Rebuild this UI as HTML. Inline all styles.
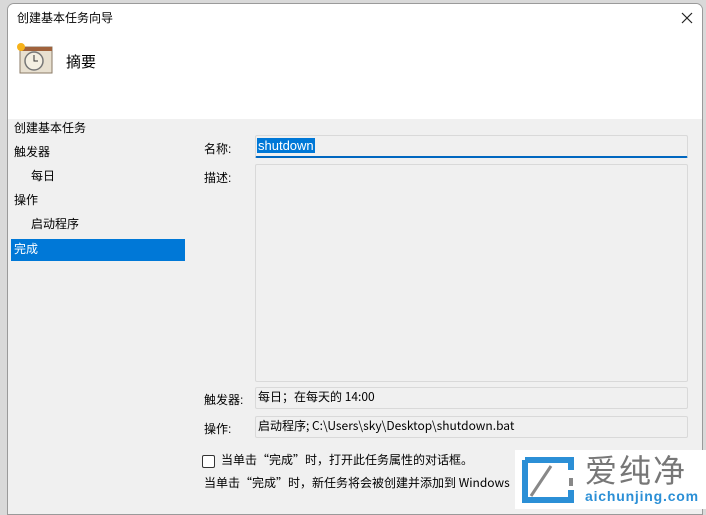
<!DOCTYPE html>
<html><head><meta charset="utf-8"><style>
body{margin:0;width:706px;height:509px;overflow:hidden;background:#d9d9d9;font-family:"Liberation Sans","Noto Sans CJK SC",sans-serif;font-size:12px;color:#000;position:relative}
.dlg{position:absolute;left:7px;top:3px;width:694px;height:510px;background:#f0f0f0;border:1px solid #9a9a9a;border-radius:7px 7px 0 0;overflow:hidden}
.hdr{position:absolute;left:0;top:0;width:100%;height:115px;background:#fff}
.a{position:absolute;white-space:nowrap}
.cj{font-family:"Noto Sans CJK SC",sans-serif}
.box{position:absolute;background:#f0f0f0;border:1px solid #d9d9d9;border-radius:2px}
</style></head><body>
<div class="dlg">
<div class="hdr"></div>
<div class="a" style="left:9px;top:5px">创建基本任务向导</div>
<svg class="a" style="left:673px;top:8px" width="12" height="12"><path d="M1 1L11 11M11 1L1 11" stroke="#222" stroke-width="1.2"/></svg>
<svg class="a" style="left:8px;top:38px" width="40" height="34">
<rect x="4" y="5" width="32" height="26" fill="#e8e0d0" stroke="#8a7a66"/>
<rect x="4" y="5" width="32" height="4" fill="#a0623c"/>
<circle cx="18" cy="19" r="9" fill="#f4efe2" stroke="#777" stroke-width="1.5"/>
<path d="M18 13v6h4" stroke="#333" fill="none"/>
<circle cx="5" cy="5" r="4" fill="#f6b21a"/>
</svg>
<div class="a" style="left:58px;top:47px;font-size:15px">摘要</div>
<div class="a" style="left:6px;top:115px">创建基本任务</div>
<div class="a" style="left:6px;top:139px">触发器</div>
<div class="a" style="left:23px;top:163px">每日</div>
<div class="a" style="left:6px;top:187px">操作</div>
<div class="a" style="left:23px;top:211px">启动程序</div>
<div class="a" style="left:3px;top:235px;width:174px;height:22px;background:#0078d7"></div>
<div class="a" style="left:6px;top:236px;color:#fff">完成</div>
<div class="a" style="left:196px;top:136px">名称:</div>
<div class="box" style="left:247px;top:131px;width:431px;height:20px;border-bottom:2px solid #0067c0"></div>
<div class="a" style="left:249px;top:134px;background:#0078d7;color:#fff;padding:0 1px;font-size:13px">shutdown</div>
<div class="a" style="left:196px;top:165px">描述:</div>
<div class="box" style="left:247px;top:160px;width:431px;height:216px"></div>
<div class="a" style="left:196px;top:387px">触发器:</div>
<div class="box" style="left:247px;top:383px;width:431px;height:20px"></div>
<div class="a cj" style="left:250px;top:384px">每日；在每天的 14:00</div>
<div class="a" style="left:196px;top:416px">操作:</div>
<div class="box" style="left:247px;top:412px;width:431px;height:20px"></div>
<div class="a cj" style="left:250px;top:413px">启动程序; C:\Users\sky\Desktop\shutdown.bat</div>
<div class="a" style="left:194px;top:451px;width:11px;height:11px;border:1px solid #333;border-radius:2px;background:#fff"></div>
<div class="a cj" style="left:213px;top:447px">当单击“完成”时，打开此任务属性的对话框。</div>
<div class="a cj" style="left:196px;top:470px">当单击“完成”时，新任务将会被创建并添加到 Windows</div>
</div>
<div class="a" style="left:515px;top:450px;width:191px;height:59px;background:#fff">
<svg class="a" style="left:6px;top:6px" width="56" height="48"><path d="M4 4h46v10M50 34v10H4V4" stroke="#2b8fd6" stroke-width="6" fill="none"/><path d="M10 40L30 10" stroke="#888" stroke-width="3"/><path d="M50 22v8" stroke="#888" stroke-width="4"/></svg>
<div class="a cj" style="left:70px;top:-4px;font-size:32px;color:#777;letter-spacing:2px">爱纯净</div>
<div class="a" style="left:70px;top:38px;font-size:14px;font-weight:bold;color:#2b8fd6;letter-spacing:0.8px">aichunjing.com</div>
</div>
</body></html>
